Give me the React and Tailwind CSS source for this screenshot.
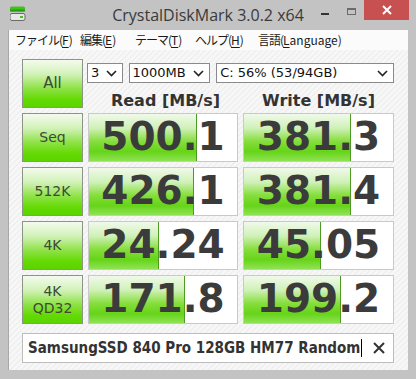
import React from "react";

const btnBg =
  "bg-[linear-gradient(to_bottom,#f4fbef_0%,#d2f2b8_30%,#8fe248_60%,#62d900_85%,#5cd400_100%)]";
const barBg =
  "bg-[linear-gradient(to_bottom,#f0f9ea_0%,#d0f1b8_30%,#86de3c_58%,#66d418_80%,#8fe255_100%)]";

const rows = [
  { label: ["Seq"], read: "500.1", rp: 73, write: "381.3", wp: 72 },
  { label: ["512K"], read: "426.1", rp: 71, write: "381.4", wp: 72 },
  { label: ["4K"], read: "24.24", rp: 47, write: "45.05", wp: 52 },
  { label: ["4K", "QD32"], read: "171.8", rp: 65, write: "199.2", wp: 65 },
];

const Btn = ({ lines }) => (
  <div
    className={`h-[49px] border border-[#8c9486] ${btnBg} flex flex-col items-center justify-center text-[#3d4a36] text-[14px] leading-[17px]`}
    style={{ fontFamily: '"DejaVu Sans", Verdana, sans-serif' }}
  >
    {lines.map((l) => (
      <span key={l}>{l}</span>
    ))}
  </div>
);

const Value = ({ text, pct }) => (
  <div className="relative h-[49px] border border-[#c9c9c9] bg-white overflow-hidden">
    <div
      className={`absolute left-0 top-0 bottom-0 ${barBg} border-r border-[#4f9a22]`}
      style={{ width: `${pct}%` }}
    />
    <div
      className="relative h-full flex items-center justify-center text-[39px] font-bold text-[#3b3b3b] leading-none pb-[2px]"
      style={{ fontFamily: '"DejaVu Sans", Verdana, sans-serif' }}
    >
      {text}
    </div>
  </div>
);

const Select = ({ w, text }) => (
  <div
    className={`${w} h-[20px] border border-[#8a8a8a] bg-white flex items-center justify-between pl-[3px] pr-[5px] text-[13px] text-[#111]`}
    style={{ fontFamily: '"DejaVu Sans", Verdana, sans-serif' }}
  >
    <span>{text}</span>
    <svg width="11" height="7" viewBox="0 0 11 7">
      <path d="M1 1l4.5 4.5L10 1" fill="none" stroke="#222" strokeWidth="1.6" />
    </svg>
  </div>
);

const MenuItem = ({ w, pre, u, post }) => (
  <span className={`${w} shrink-0 whitespace-nowrap`}>
    <span className="tracking-[-1px]">{pre}</span>
    <span className="underline underline-offset-2">{u}</span>
    {post}
  </span>
);

export default function App() {
  return (
    <div className="w-[416px] h-[379px] bg-[#c3c3c3] overflow-hidden relative">
      {/* title bar */}
      <div className="h-[30px] relative flex items-center justify-center">
        <svg className="absolute left-[10px] top-[6px]" width="16" height="16" viewBox="0 0 16 16">
          <rect x="0" y="0.5" width="15" height="5" rx="1.5" fill="#3fc21a" />
          <rect x="0" y="3.5" width="15" height="2" fill="#2a9a10" />
          <rect x="0" y="7.5" width="15" height="7" rx="2" fill="#e8e8e8" stroke="#6a6a6a" />
          <rect x="10" y="10" width="3" height="2" fill="#4cc220" />
        </svg>
        <span
          className="text-[16px] text-[#3a3a3a] pb-[1px]"
          style={{ fontFamily: '"Open Sans", "Noto Sans", sans-serif' }}
        >
          CrystalDiskMark 3.0.2 x64
        </span>
        <div className="absolute left-[321px] top-[13px] w-[8px] h-[2px] bg-[#333]" />
        <div className="absolute left-[347px] top-[8px] w-[9px] h-[7px] border border-[#6a6a6a] border-t-2" />
        <div className="absolute left-[364px] top-0 w-[45px] h-[20px] bg-[#c75050] flex items-center justify-center">
          <svg width="10" height="10" viewBox="0 0 10 10">
            <path d="M1 1l8 8M9 1l-8 8" stroke="#fff" strokeWidth="2" />
          </svg>
        </div>
      </div>

      {/* client */}
      <div className="ml-[8px] w-[400px] h-[340px] border-l border-[#a8a8a8] flex flex-col">
        <div
          className="h-[20px] bg-[#fbfbfb] flex items-center pl-[6px] text-[12px] text-[#1a1a1a]"
          style={{ fontFamily: '"Noto Sans CJK JP", "Noto Sans", sans-serif' }}
        >
          <MenuItem w="w-[65px]" pre="ファイル(" u="F" post=")" />
          <MenuItem w="w-[55px]" pre="編集(" u="E" post=")" />
          <MenuItem w="w-[60px]" pre="テーマ(" u="T" post=")" />
          <MenuItem w="w-[63px]" pre="ヘルプ(" u="H" post=")" />
          <MenuItem w="w-[90px]" pre="言語(" u="L" post="anguage)" />
        </div>

        <div className="flex-1 bg-[#f3f3f3] bg-[repeating-linear-gradient(135deg,#f7f7f7_0px,#f7f7f7_2px,#ececec_3px,#f7f7f7_4px)] pl-[13px] pt-[9px]">
          <div className="grid grid-cols-[61px_150px_151px] auto-rows-[49px] gap-x-[5px] gap-y-[5px]">
            <div
              className={`h-[49px] border border-[#8c9486] ${btnBg} flex items-center justify-center text-[#3d4a36] text-[15px]`}
              style={{ fontFamily: '"DejaVu Sans", Verdana, sans-serif' }}
            >
              All
            </div>
            <div className="col-span-2 flex flex-col">
              <div className="flex gap-[6px] mt-[4px] -ml-[1px]">
                <Select w="w-[36px]" text="3" />
                <Select w="w-[83px]" text="1000MB" />
                <Select w="w-[181px]" text="C: 56% (53/94GB)" />
              </div>
              <div
                className="flex text-[16px] font-bold text-[#333] mt-[6px]"
                style={{ fontFamily: '"DejaVu Sans", Verdana, sans-serif' }}
              >
                <div className="w-[155px] text-center">Read [MB/s]</div>
                <div className="w-[151px] text-center">Write [MB/s]</div>
              </div>
            </div>
            {rows.map((r) => (
              <React.Fragment key={r.read}>
                <Btn lines={r.label} />
                <Value text={r.read} pct={r.rp} />
                <Value text={r.write} pct={r.wp} />
              </React.Fragment>
            ))}
          </div>

          <div className="mt-[9px] w-[372px] h-[30px] border border-[#bdbdbd] bg-white flex items-center pl-[5px] pr-[8px]">
            <span
              className="text-[15px] font-bold text-[#333] whitespace-nowrap"
              style={{ fontFamily: '"DejaVu Sans Condensed", "DejaVu Sans", Verdana, sans-serif', fontStretch: "condensed" }}
            >
              SamsungSSD 840 Pro 128GB HM77 Random
            </span>
            <span className="w-px h-[18px] bg-black ml-[1px] shrink-0" />
            <svg className="ml-auto shrink-0" width="12" height="12" viewBox="0 0 12 12">
              <path d="M1 1l10 10M11 1L1 11" stroke="#333" strokeWidth="2" />
            </svg>
          </div>
        </div>
      </div>
    </div>
  );
}
